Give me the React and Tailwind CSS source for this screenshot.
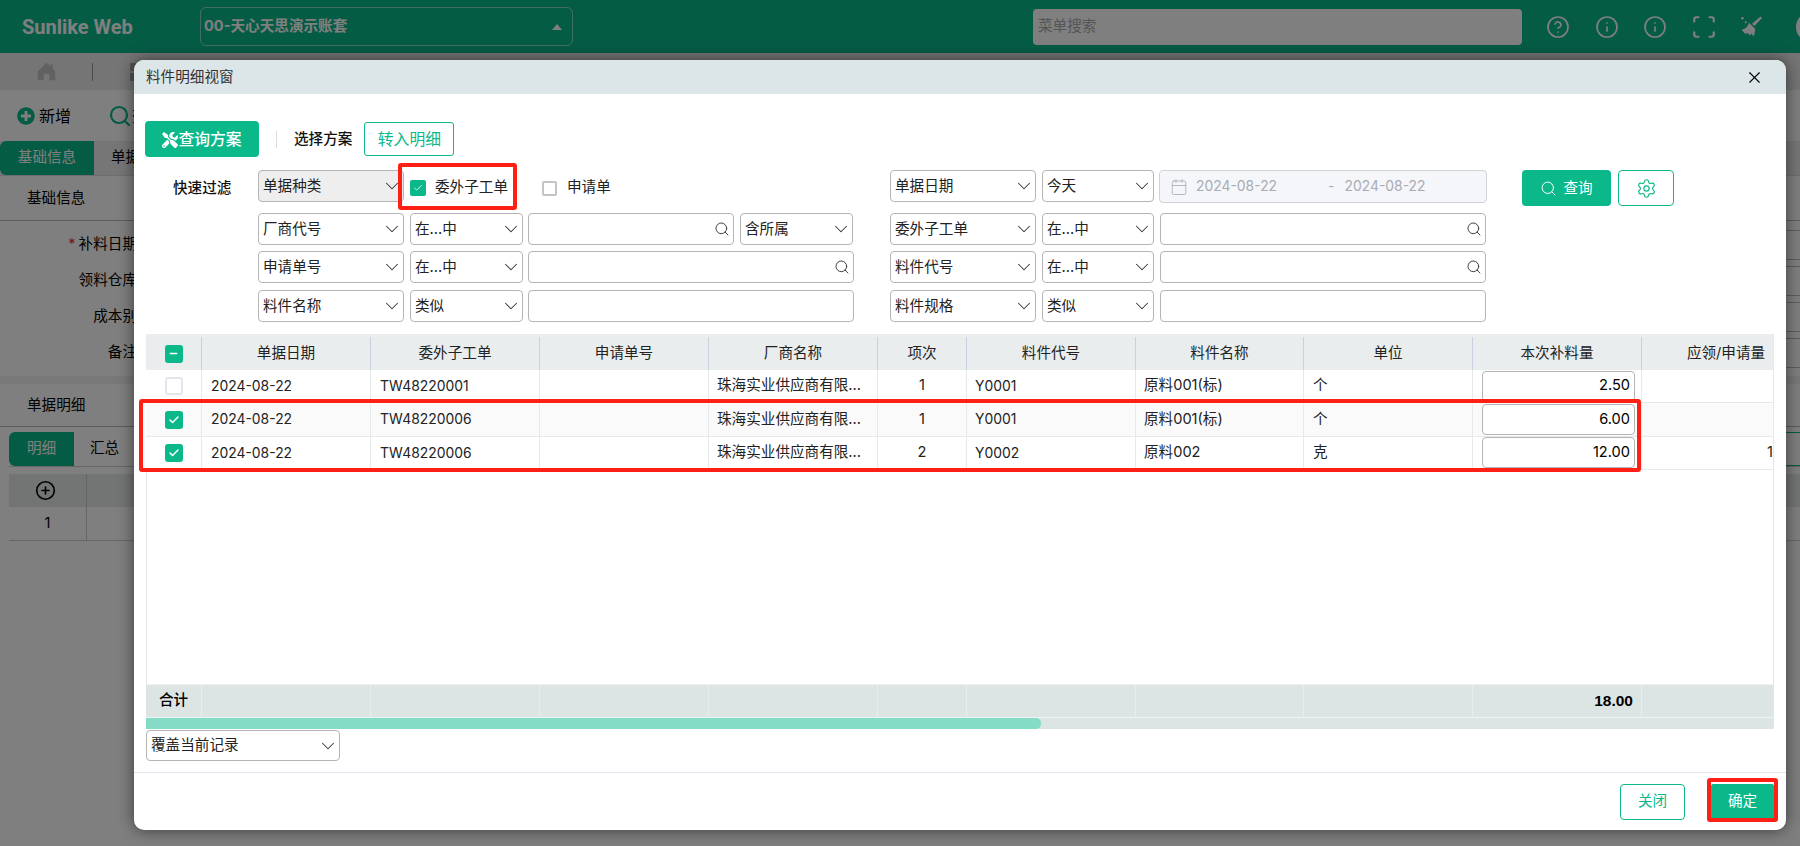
import React from 'react';
import { ChevronDown, CircleHelp, CirclePlus, Info, Scan, Search, Settings, X, Calendar, Check, Minus } from 'lucide-react';
import { FaTools, FaPlusCircle } from 'react-icons/fa';

const rows = [
  { no: 'TW48220001', seq: '1', code: 'Y0001', name: '原料001(标)', unit: '个', qty: '2.50', apply: '', checked: false, bg: 'bg-white' },
  { no: 'TW48220006', seq: '1', code: 'Y0001', name: '原料001(标)', unit: '个', qty: '6.00', apply: '', checked: true, bg: 'bg-[#fafafa]' },
  { no: 'TW48220006', seq: '2', code: 'Y0002', name: '原料002', unit: '克', qty: '12.00', apply: '12.00', checked: true, bg: 'bg-white' },
];

const headers = ['单据日期', '委外子工单', '申请单号', '厂商名称', '项次', '料件代号', '料件名称', '单位', '本次补料量', '应领/申请量'];

const gridCols = 'grid grid-cols-[55px_169px_169px_169px_169px_89px_169px_168px_169px_169px_169px]';

function Sel({ text, className = '' }) {
  return (
    <div className={`h-full shrink-0 flex items-center justify-between pl-[4px] border border-[#b5b5b5] rounded-[4px] text-[14.6px] text-[#222] ${className}`}>
      <span className="pt-[1px]">{text}</span>
      <ChevronDown size={22} strokeWidth={1.1} className="text-[#333]" />
    </div>
  );
}

function SearchInput({ className = '' }) {
  return (
    <div className={`h-full flex items-center justify-end pr-[3px] border border-[#b5b5b5] rounded-[4px] ${className}`}>
      <Search size={16} strokeWidth={1.4} className="text-[#333]" />
    </div>
  );
}

function Box({ checked }) {
  if (checked) {
    return (
      <div className="w-[18px] h-[18px] rounded-[3px] bg-[#0ab88a] flex items-center justify-center">
        <Check size={12} strokeWidth={3} className="text-white" />
      </div>
    );
  }
  return <div className="w-[18px] h-[18px] rounded-[3px] bg-white border-2 border-[#e4e4ee]" />;
}

function BroomIcon() {
  return (
    <svg width="23" height="23" viewBox="0 0 24 24" fill="currentColor">
      <path d="M21.5 1.5 L23 3 L15 11.5 L12.5 9 Z" />
      <path d="M9.5 8 L16 14.5 L14.5 22.5 L11.5 19 L10.5 21.5 L7.5 18.5 L6 20 L1.5 15.5 C5.5 14.5 8.5 12 9.5 8 Z" />
      <circle cx="2.5" cy="3.5" r="1.3" />
      <circle cx="6" cy="7.5" r="1.1" />
    </svg>
  );
}

function HomeIcon() {
  return (
    <svg width="19" height="19" viewBox="0 0 24 24" fill="#c2c2c2">
      <path d="M12 1 L17 5.5 V3 H20 V8.5 L23 12 V23 H15.5 V15 H8.5 V23 H1 V12 Z" />
    </svg>
  );
}

// page behind the dialog, only the edges stay visible
function Background() {
  return (
    <div className="h-full flex flex-col bg-white">
      <header className="h-[53px] shrink-0 bg-[#0ab88a] flex items-center text-white">
        <div className="w-[200px] shrink-0 pl-[22px] text-[20px] font-bold font-['Roboto',sans-serif]">Sunlike Web</div>
        <div className="w-[373px] shrink-0 h-[39px] pl-[3px] pr-[5px] flex items-center justify-between border border-white/50 rounded-[6px]">
          <span className="text-[14.6px] font-bold">00-天心天思演示账套</span>
          <svg width="10" height="6" viewBox="0 0 10 6" className="mr-[5px]"><path d="M5 0 L10 6 L0 6 Z" fill="#fff" /></svg>
        </div>
        <div className="ml-[460px] w-[489px] shrink-0 h-[36px] bg-white rounded-[4px] flex items-center pl-[5px] text-[14.6px] text-[#aaa]">菜单搜索</div>
        <div className="ml-[24px] shrink-0 flex items-center gap-[24.5px]">
          <CircleHelp size={24} strokeWidth={1.7} />
          <Info size={24} strokeWidth={1.7} />
          <Info size={24} strokeWidth={1.7} />
          <Scan size={26} strokeWidth={2} className="-mx-[1px]" />
          <BroomIcon />
        </div>
        <div className="ml-[33px] w-[30px] h-[30px] shrink-0 rounded-full bg-white" />
      </header>

      <div className="h-[37px] shrink-0 bg-[#eaeaea] flex items-center pl-[37px]">
        <HomeIcon />
        <div className="ml-[36px] w-px h-[18px] bg-[#999]" />
        <div className="ml-[37px] w-[18px] h-[18px] shrink-0 grid grid-cols-2 gap-[2px]">
          <div className="bg-[#aaa]" />
          <div className="bg-[#aaa]" />
          <div className="bg-[#aaa]" />
          <div className="bg-[#aaa]" />
        </div>
      </div>

      <div className="h-[51px] shrink-0 flex items-center pl-[17px] text-[14.6px] text-black">
        <FaPlusCircle size={18} className="text-[#0ab88a]" />
        <span className="ml-[4px] text-[16px]">新增</span>
        <Search size={24} strokeWidth={2.2} className="ml-[37px] text-[#0ab88a]" />
        <span className="text-[16px]">查询</span>
      </div>

      <div className="h-[35px] shrink-0 bg-[#ececec] border-b border-[#ddd] flex items-center text-[14.6px] text-black">
        <div className="w-[94px] h-full rounded-l-[6px] bg-[#0ab88a] text-white flex items-center justify-center">基础信息</div>
        <span className="ml-[17px]">单据信息</span>
      </div>

      <div className="h-[45px] shrink-0 border-b border-[#bbb] flex items-center pl-[27px] pt-[2px] text-[14.6px] text-black">基础信息</div>

      <div className="pt-[6px] h-[155px] shrink-0 text-[14.6px] text-black">
        {[['补料日期', true], ['领料仓库', false], ['成本别', false], ['备注', false]].map(([label, req]) => (
          <div key={label} className="h-[36px] flex items-center justify-between">
            <span className="whitespace-nowrap w-[137px] shrink-0 text-right">
              {req && <span className="text-[#e33] mr-[3px]">*</span>}
              {label}
            </span>
            <div className="w-[200px] -mr-[20px] h-[30px] shrink-0 border border-[#bbb]" />
          </div>
        ))}
      </div>

      <div className="h-[8px] shrink-0 bg-[#f0f0f2]" />

      <div className="h-[43px] shrink-0 border-b border-[#bbb] flex items-center pl-[27px] pt-[2px] text-[14.6px] text-black">单据明细</div>

      <div className="flex-1 pl-[9px] pt-[5px] text-[14.6px] text-black">
        <div className="h-[35px] flex items-center border-b border-[#ccc] justify-between">
          <div className="flex items-center h-full">
            <div className="w-[65px] h-full rounded-l-[6px] bg-[#0ab88a] text-white flex items-center justify-center">明细</div>
            <span className="ml-[16px]">汇总</span>
          </div>
          <div className="w-[14px] h-full border-y border-[#0ab88a]" />
        </div>
        <div className="mt-[7px] h-[33px] bg-[#e6e8e8] flex items-center">
          <div className="w-[78px] h-full border-r border-[#c6cad0] flex items-center justify-center pr-[5px]">
            <CirclePlus size={21} strokeWidth={1.9} className="text-black" />
          </div>
        </div>
        <div className="h-[34px] border-b border-[#ccc] flex items-center">
          <div className="w-[78px] h-full border-r border-[#ccc] flex items-center justify-center">1</div>
        </div>
      </div>
    </div>
  );
}

function Table() {
  return (
    <div className="mx-[12px] h-[395px] flex flex-col overflow-hidden text-[14.6px] text-[#222] border-r border-[#e6e8e8]">
      <div className={`${gridCols} h-[36px] shrink-0 bg-[#e9eded] pt-[3px]`}>
        <div className="flex items-center justify-center">
          <div className="w-[18px] h-[18px] rounded-[3px] bg-[#0ab88a] flex items-center justify-center">
            <Minus size={11} strokeWidth={3} className="text-white" />
          </div>
        </div>
        {headers.map((h) => (
          <div key={h} className="border-l border-[#c9d0de] flex items-center justify-center">{h}</div>
        ))}
      </div>

      <div className="flex-1 shadow-[inset_1px_0_0_#e6e8e8]">
        {rows.map((r, i) => (
          <div key={i} className={`${gridCols} h-[33.4px] border-b border-[#e8eaea] ${r.bg}`}>
            <div className="flex items-center justify-center"><Box checked={r.checked} /></div>
            <div className="border-l border-[#e8eaea] px-[9px] flex items-center text-[13.9px]">2024-08-22</div>
            <div className="border-l border-[#e8eaea] px-[9px] flex items-center text-[13.9px]">{r.no}</div>
            <div className="border-l border-[#e8eaea]" />
            <div className="border-l border-[#e8eaea] px-[8px] flex items-center whitespace-nowrap">珠海实业供应商有限...</div>
            <div className="border-l border-[#e8eaea] flex items-center justify-center">{r.seq}</div>
            <div className="border-l border-[#e8eaea] px-[8px] flex items-center text-[13.9px]">{r.code}</div>
            <div className="border-l border-[#e8eaea] px-[8px] flex items-center">{r.name}</div>
            <div className="border-l border-[#e8eaea] px-[9px] flex items-center">{r.unit}</div>
            <div className="border-l border-[#e8eaea] pl-[9px] pr-[6px] flex items-center">
              <div className="w-full h-[31px] border border-[#b5b5b5] rounded-[4px] bg-white flex items-center justify-end pr-[4px] text-black">{r.qty}</div>
            </div>
            <div className="border-l border-[#e8eaea] pr-[6px] flex items-center justify-end">{r.apply}</div>
          </div>
        ))}
      </div>

      <div className={`${gridCols} h-[34px] shrink-0 bg-[#dce5e3] border-y border-[#eef2f1]`}>
        <div className="flex items-center justify-center text-black font-medium">合计</div>
        {headers.map((h) => (
          <div key={h} className="border-l border-[#e8eeed] flex items-center justify-end pr-[8px] text-[15.5px] font-bold text-black font-['Liberation_Sans',sans-serif]">
            {h === '本次补料量' ? '18.00' : ''}
          </div>
        ))}
      </div>

      <div className="h-[11px] shrink-0 bg-[#dce5e3]">
        <div className="w-[895px] h-full bg-[#84dcc6] rounded-r-[5px]" />
      </div>
    </div>
  );
}

function Dialog() {
  return (
    <div className="absolute left-[134px] top-[60px] w-[1652px] h-[770px] bg-white rounded-[10px] shadow-[0_0_16px_rgba(0,0,0,0.55)] flex flex-col overflow-hidden">
      <div className="h-[34px] shrink-0 bg-[#dce5e7] flex items-center justify-between pl-[12px] pr-[22px] pt-[1px] text-[14.6px] text-[#333]">
        <span>料件明细视窗</span>
        <X size={19} strokeWidth={1.4} className="text-black" />
      </div>

      <div className="pt-[27px] pl-[11px] flex items-center h-[63px] shrink-0">
        <div className="w-[114px] h-[36px] pt-[1px] rounded-[4px] bg-[#0ab88a] text-white flex items-center justify-center text-[15.8px] font-medium">
          <FaTools size={16} />
          <span>查询方案</span>
        </div>
        <div className="ml-[17px] w-px h-[17px] bg-[#ddd]" />
        <span className="ml-[17px] pt-[1px] text-[14.6px] font-medium text-[#111]">选择方案</span>
        <div className="ml-[12px] w-[90px] h-[34px] pt-[1px] rounded-[3px] border border-[#0ab88a] text-[#0ab88a] flex items-center justify-center text-[15.8px]">转入明细</div>
      </div>

      <div className="mt-[13px] pl-[39px] flex shrink-0">
        <div className="w-[85px] h-[36px] pt-[1px] text-[14.6px] font-medium text-[#111] flex items-center">快速过滤</div>

        <div className="w-[596px] flex flex-col">
          <div className="h-[32px] flex items-center">
            <Sel text="单据种类" className="w-[146px] bg-[#eeeeee]" />
            <div className="ml-[6px] mt-[4px] w-[16px] h-[16px] rounded-[2px] bg-[#0ab88a] flex items-center justify-center">
              <Check size={10} strokeWidth={2} className="text-white" />
            </div>
            <span className="ml-[9px] mt-[4px] text-[14.6px] text-[#222]">委外子工单</span>
            <div className="ml-[34px] mt-[4px] w-[15px] h-[15px] rounded-[2px] border-2 border-[#c4c4c4]" />
            <span className="ml-[10px] mt-[4px] text-[14.6px] text-[#222]">申请单</span>
          </div>
          <div className="mt-[11px] h-[32px] flex gap-[6px]">
            <Sel text="厂商代号" className="w-[146px]" />
            <Sel text="在...中" className="w-[113px]" />
            <SearchInput className="w-[206px] -ml-px" />
            <Sel text="含所属" className="w-[113px]" />
          </div>
          <div className="mt-[6px] h-[32px] flex gap-[6px]">
            <Sel text="申请单号" className="w-[146px]" />
            <Sel text="在...中" className="w-[113px]" />
            <SearchInput className="flex-1 -ml-px" />
          </div>
          <div className="mt-[7px] h-[32px] flex gap-[6px]">
            <Sel text="料件名称" className="w-[146px]" />
            <Sel text="类似" className="w-[113px]" />
            <div className="flex-1 -ml-px h-full border border-[#b5b5b5] rounded-[4px]" />
          </div>
        </div>

        <div className="ml-[36px] w-[597px] flex flex-col">
          <div className="h-[32px] flex gap-[6px]">
            <Sel text="单据日期" className="w-[146px]" />
            <Sel text="今天" className="w-[112px]" />
            <div className="flex-1 -ml-px h-[33px] bg-[#f4f6fa] border border-[#d0d2d6] rounded-[4px] flex items-center pl-[10px] text-[13.9px] text-[#a8abb2]">
              <Calendar size={18} strokeWidth={1.1} />
              <span className="ml-[8px]">2024-08-22</span>
              <span className="ml-[51px]">-</span>
              <span className="ml-[10px]">2024-08-22</span>
            </div>
          </div>
          <div className="mt-[11px] h-[32px] flex gap-[6px] pr-[1px]">
            <Sel text="委外子工单" className="w-[146px]" />
            <Sel text="在...中" className="w-[112px]" />
            <SearchInput className="flex-1" />
          </div>
          <div className="mt-[6px] h-[32px] flex gap-[6px] pr-[1px]">
            <Sel text="料件代号" className="w-[146px]" />
            <Sel text="在...中" className="w-[112px]" />
            <SearchInput className="flex-1" />
          </div>
          <div className="mt-[7px] h-[32px] flex gap-[6px] pr-[1px]">
            <Sel text="料件规格" className="w-[146px]" />
            <Sel text="类似" className="w-[112px]" />
            <div className="flex-1 h-full border border-[#b5b5b5] rounded-[4px]" />
          </div>
        </div>

        <div className="ml-[35px] h-[36px] flex gap-[7px]">
          <div className="w-[89px] pt-[1px] rounded-[4px] bg-[#0ab88a] text-white flex items-center justify-center gap-[6px] text-[14.6px]">
            <Search size={17} strokeWidth={1.4} />
            <span>查询</span>
          </div>
          <div className="w-[56px] rounded-[4px] border border-[#0ab88a] text-[#0ab88a] flex items-center justify-center">
            <Settings size={21} strokeWidth={1.3} />
          </div>
        </div>
      </div>

      <div className="mt-[12px] shrink-0"><Table /></div>

      <div className="mt-[1px] pl-[12px] h-[31px] shrink-0">
        <Sel text="覆盖当前记录" className="w-[194px]" />
      </div>

      <div className="mt-[11px] flex-1 border-t border-[#dfe6ee] flex items-start justify-end pt-[11px] pr-[12px] gap-[26px]">
        <div className="w-[65px] h-[36px] rounded-[4px] border border-[#0ab88a] text-[#0ab88a] flex items-center justify-center text-[14.6px]">关闭</div>
        <div className="w-[63px] h-[36px] rounded-[2px] bg-[#0ab88a] text-white flex items-center justify-center text-[14.6px]">确定</div>
      </div>

      {/* red annotation frames drawn over the screenshot */}
      <div className="absolute left-[264px] top-[103px] w-[119px] h-[47px] border-4 border-[#ff2015] rounded-[3px]" />
      <div className="absolute left-[5px] top-[339px] w-[1502px] h-[73px] border-4 border-[#ff2015] rounded-[3px]" />
      <div className="absolute left-[1573px] top-[718px] w-[71px] h-[44px] border-4 border-[#ff2015] rounded-[3px]" />
    </div>
  );
}

export default function App() {
  return (
    <div className="relative w-[1800px] h-[846px] overflow-hidden font-['Inter','Noto_Sans_CJK_SC',sans-serif]">
      <Background />
      <div className="absolute inset-0 bg-black/50" />
      <Dialog />
    </div>
  );
}
